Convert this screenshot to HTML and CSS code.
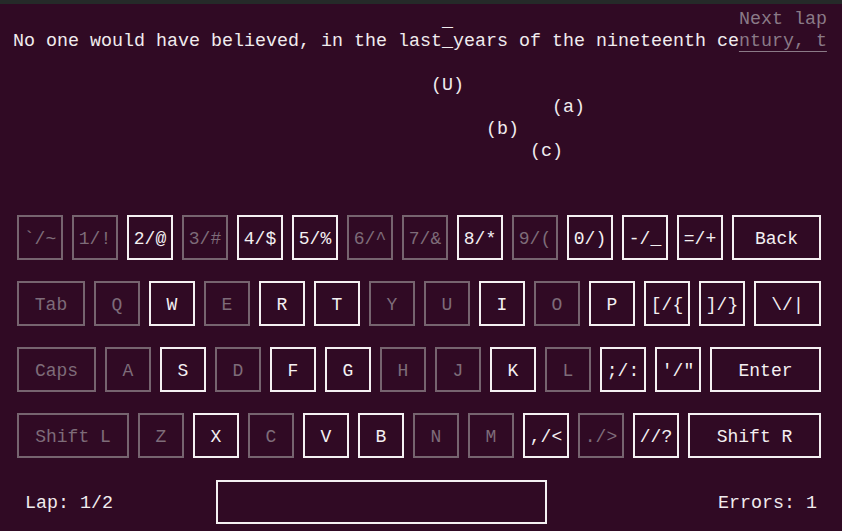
FILE: index.html
```html
<!DOCTYPE html>
<html>
<head>
<meta charset="utf-8">
<link rel="stylesheet" href="styles.css">
</head>
<body>
<div class="topbar"></div>
<pre class="screen">                                       <span class="mark">_</span>                          <span class="dim">Next lap</span>
No one would have believed, in the last_years of the nineteenth ce<span class="dim ul">ntury, t</span>

                                      (U)
                                                 (a)
                                           (b)
                                               (c)</pre>
<div class="keyboard">
  <div class="row">
    <div class="key dim">`/~</div>
    <div class="key dim">1/!</div>
    <div class="key">2/@</div>
    <div class="key dim">3/#</div>
    <div class="key">4/$</div>
    <div class="key">5/%</div>
    <div class="key dim">6/^</div>
    <div class="key dim">7/&amp;</div>
    <div class="key">8/*</div>
    <div class="key dim">9/(</div>
    <div class="key">0/)</div>
    <div class="key">-/_</div>
    <div class="key">=/+</div>
    <div class="key back">Back</div>
  </div>
  <div class="row">
    <div class="key dim tab">Tab</div>
    <div class="key dim">Q</div>
    <div class="key">W</div>
    <div class="key dim">E</div>
    <div class="key">R</div>
    <div class="key">T</div>
    <div class="key dim">Y</div>
    <div class="key dim">U</div>
    <div class="key">I</div>
    <div class="key dim">O</div>
    <div class="key">P</div>
    <div class="key">[/{</div>
    <div class="key">]/}</div>
    <div class="key bslash">\/|</div>
  </div>
  <div class="row">
    <div class="key dim caps">Caps</div>
    <div class="key dim">A</div>
    <div class="key">S</div>
    <div class="key dim">D</div>
    <div class="key">F</div>
    <div class="key">G</div>
    <div class="key dim">H</div>
    <div class="key dim">J</div>
    <div class="key">K</div>
    <div class="key dim">L</div>
    <div class="key">;/:</div>
    <div class="key">'/"</div>
    <div class="key enter">Enter</div>
  </div>
  <div class="row">
    <div class="key dim shiftl">Shift L</div>
    <div class="key dim">Z</div>
    <div class="key">X</div>
    <div class="key dim">C</div>
    <div class="key">V</div>
    <div class="key">B</div>
    <div class="key dim">N</div>
    <div class="key dim">M</div>
    <div class="key">,/&lt;</div>
    <div class="key dim">./&gt;</div>
    <div class="key">//?</div>
    <div class="key shiftr">Shift R</div>
  </div>
</div>
<div class="status">
  <span class="lap">Lap: 1/2</span>
  <div class="inputbox"></div>
  <span class="errors">Errors: 1</span>
</div>
</body>
</html>
```
FILE: styles.css
```css
html, body {
  margin: 0;
  padding: 0;
  background: #300a24;
  width: 842px;
  height: 531px;
  overflow: hidden;
}
body {
  font-family: "Liberation Mono", "DejaVu Sans Mono", monospace;
  font-size: 18.33px;
  color: #f0ecee;
}
.topbar {
  height: 4px;
  background: #252a29;
}
.screen {
  margin: 4.6px 0 0 13px;
  font-family: inherit;
  font-size: 18.33px;
  line-height: 22.1px;
  color: #f0ecee;
}
.mark {
  position: relative;
  top: 2px;
}
.dim {
  color: #8a7a87;
}
.ul {
  text-decoration: underline;
  text-decoration-color: #8a7a87;
  text-underline-offset: 5px;
  text-decoration-thickness: 1px;
}
.keyboard {
  margin: 51.7px 0 0 17px;
  display: flex;
  flex-direction: column;
  gap: 21px;
}
.row {
  display: flex;
  gap: 9px;
}
.key {
  box-sizing: border-box;
  width: 46px;
  height: 45px;
  border: 2px solid #f4f0f2;
  padding-top: 3px;
  display: flex;
  align-items: center;
  justify-content: center;
  color: #f4f0f2;
  font-size: 18px;
  white-space: pre;
}
.key.dim {
  border-color: #76646f;
  color: #7e6c79;
}
.back { width: 89px; }
.tab { width: 68px; }
.bslash { width: 67px; }
.caps { width: 79px; }
.enter { width: 111px; }
.shiftl { width: 112px; }
.shiftr { width: 133px; }
.status {
  margin-top: 22px;
  display: flex;
  align-items: center;
  padding: 0 25px;
  height: 44px;
}
.lap {
  width: 88px;
  padding-top: 3px;
  color: #f0ecee;
}
.inputbox {
  box-sizing: border-box;
  margin-left: 103px;
  width: 331px;
  height: 44px;
  border: 2px solid #f4f0f2;
}
.errors {
  margin-left: auto;
  padding-top: 3px;
  color: #f0ecee;
}
```
